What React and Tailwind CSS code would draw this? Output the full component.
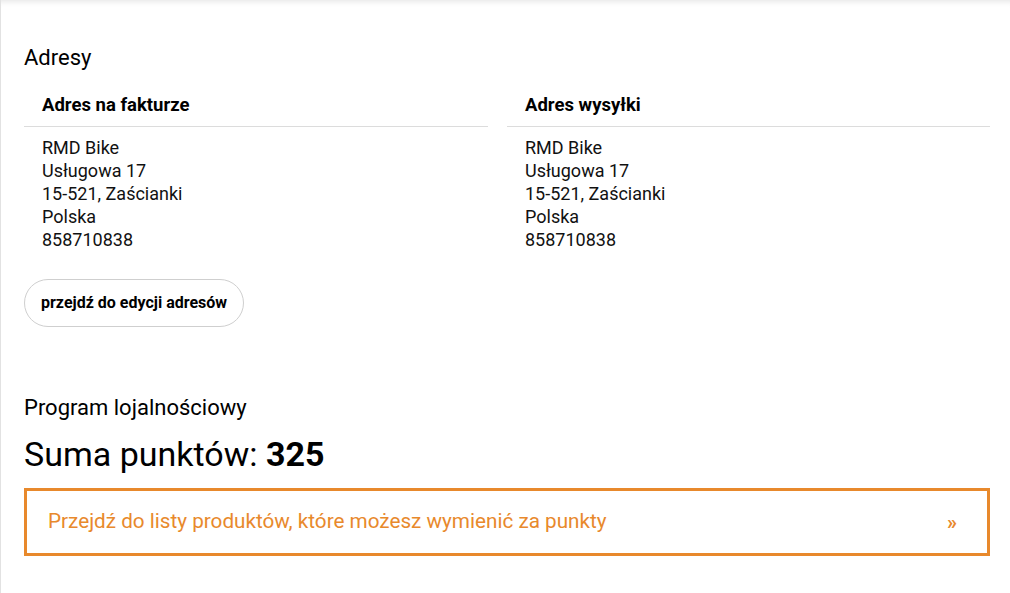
export default function App() {
  const lines = ["RMD Bike", "Usługowa 17", "15-521, Zaścianki", "Polska", "858710838"];
  const Col = ({ title, extra }) => (
    <div className={extra}>
      <div className="pl-[18px] pt-[23px] pb-[10px] border-b border-[#dcdcdc] text-[18.5px] font-bold leading-[22px] text-black">
        {title}
      </div>
      <div className="pl-[18px] pt-[9px] text-[18px] leading-[23px] text-[#111]">
        {lines.map((l) => (
          <div key={l}>{l}</div>
        ))}
      </div>
    </div>
  );
  return (
    <div
      className="w-[1010px] h-[593px] bg-white border-l border-[#e2e2e2] shadow-[inset_0_7px_6px_-6px_rgba(0,0,0,0.12)] pl-[23px] pr-[20px] pt-[45px] overflow-hidden"
      style={{ fontFamily: "Roboto, 'Liberation Sans', sans-serif" }}
    >
      <h2 className="text-[22px] leading-[26px] text-black">Adresy</h2>
      <div className="grid grid-cols-2">
        <Col title="Adres na fakturze" extra="mr-[19px]" />
        <Col title="Adres wysyłki" extra="" />
      </div>
      <button className="mt-[28px] h-[48px] px-[16px] rounded-full border border-[#cfcfcf] bg-white text-[16px] font-bold text-black">
        przejdź do edycji adresów
      </button>
      <h2 className="mt-[68px] text-[22px] leading-[26px] text-black">Program lojalnościowy</h2>
      <div className="mt-[13px] text-[34px] leading-[40px] text-black">
        Suma punktów: <span className="font-bold">325</span>
      </div>
      <div className="mt-[14px] h-[68px] border-[3px] border-[#e8892c] flex items-center justify-between pl-[21px] pr-[30px]">
        <span className="text-[20.7px] text-[#e8892c]">Przejdź do listy produktów, które możesz wymienić za punkty</span>
        <span className="text-[20px] text-[#e8892c] font-bold">»</span>
      </div>
    </div>
  );
}
